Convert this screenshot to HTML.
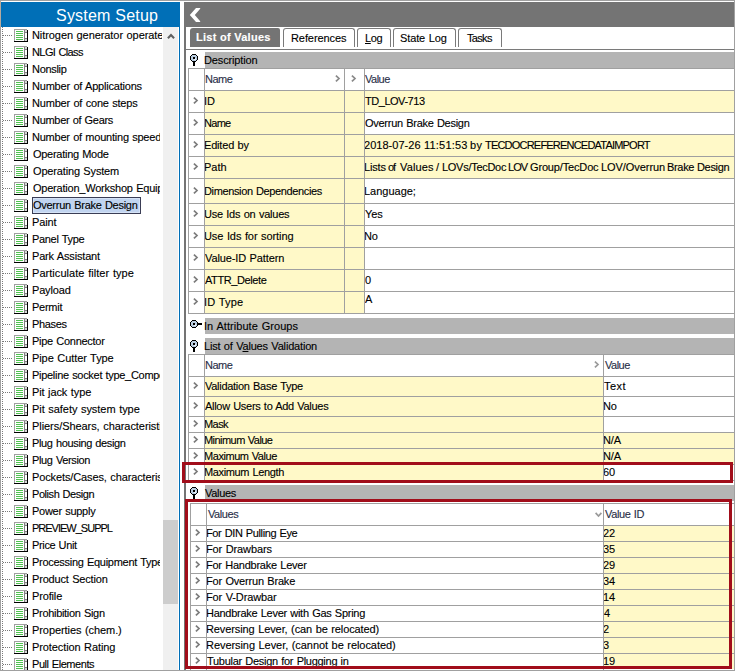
<!DOCTYPE html>
<html><head><meta charset="utf-8"><style>
html,body{margin:0;padding:0}
body{width:735px;height:671px;position:relative;overflow:hidden;background:#fff;font-family:"Liberation Sans",sans-serif}
div{position:absolute}
.t,.th,.tb{font-size:11px;line-height:13px;white-space:nowrap;color:#000;word-spacing:0.6px;-webkit-text-stroke:0.12px currentColor}
.th{color:#2a2f48}
.tb{font-weight:bold;color:#fff;word-spacing:0}
.hdr{font-size:16px;line-height:18px;color:#fff;white-space:nowrap}
u{text-decoration:underline}
</style></head><body>
<div style="left:0px;top:0px;width:735px;height:1px;background:#a0a0a0;"></div>
<div style="left:0px;top:0px;width:1px;height:671px;background:#a0a0a0;"></div>
<div style="left:0px;top:1px;width:1px;height:26px;background:#b6aa9e;"></div>
<div style="left:734px;top:0px;width:1px;height:671px;background:#a0a0a0;"></div>
<div style="left:0px;top:670px;width:735px;height:1px;background:#a0a0a0;"></div>
<div style="left:1px;top:2px;width:179px;height:25px;background:#006fb7;"></div>
<div class="hdr" style="left:56px;top:7px;letter-spacing:0.218px;">System Setup</div>
<div style="left:179px;top:27px;width:1px;height:643px;background:#006fb7;"></div>
<div style="left:163px;top:27px;width:15px;height:643px;background:#f0f0f0;"></div>
<div style="left:163px;top:520px;width:15px;height:84px;background:#cdcdcd;"></div>
<svg style="position:absolute;left:166px;top:32px" width="10" height="8" viewBox="0 0 10 8"><path d="M1.9 6.2 L5 3.1 L8.1 6.2" fill="none" stroke="#606060" stroke-width="2.1"/></svg>
<svg style="position:absolute;left:0;top:0" width="163" height="670" fill="#7a7a7a" shape-rendering="crispEdges"><rect x="2" y="27" width="1" height="1"/><rect x="2" y="29" width="1" height="1"/><rect x="2" y="31" width="1" height="1"/><rect x="2" y="33" width="1" height="1"/><rect x="2" y="35" width="1" height="1"/><rect x="2" y="37" width="1" height="1"/><rect x="2" y="39" width="1" height="1"/><rect x="2" y="41" width="1" height="1"/><rect x="2" y="43" width="1" height="1"/><rect x="2" y="45" width="1" height="1"/><rect x="2" y="47" width="1" height="1"/><rect x="2" y="49" width="1" height="1"/><rect x="2" y="51" width="1" height="1"/><rect x="2" y="53" width="1" height="1"/><rect x="2" y="55" width="1" height="1"/><rect x="2" y="57" width="1" height="1"/><rect x="2" y="59" width="1" height="1"/><rect x="2" y="61" width="1" height="1"/><rect x="2" y="63" width="1" height="1"/><rect x="2" y="65" width="1" height="1"/><rect x="2" y="67" width="1" height="1"/><rect x="2" y="69" width="1" height="1"/><rect x="2" y="71" width="1" height="1"/><rect x="2" y="73" width="1" height="1"/><rect x="2" y="75" width="1" height="1"/><rect x="2" y="77" width="1" height="1"/><rect x="2" y="79" width="1" height="1"/><rect x="2" y="81" width="1" height="1"/><rect x="2" y="83" width="1" height="1"/><rect x="2" y="85" width="1" height="1"/><rect x="2" y="87" width="1" height="1"/><rect x="2" y="89" width="1" height="1"/><rect x="2" y="91" width="1" height="1"/><rect x="2" y="93" width="1" height="1"/><rect x="2" y="95" width="1" height="1"/><rect x="2" y="97" width="1" height="1"/><rect x="2" y="99" width="1" height="1"/><rect x="2" y="101" width="1" height="1"/><rect x="2" y="103" width="1" height="1"/><rect x="2" y="105" width="1" height="1"/><rect x="2" y="107" width="1" height="1"/><rect x="2" y="109" width="1" height="1"/><rect x="2" y="111" width="1" height="1"/><rect x="2" y="113" width="1" height="1"/><rect x="2" y="115" width="1" height="1"/><rect x="2" y="117" width="1" height="1"/><rect x="2" y="119" width="1" height="1"/><rect x="2" y="121" width="1" height="1"/><rect x="2" y="123" width="1" height="1"/><rect x="2" y="125" width="1" height="1"/><rect x="2" y="127" width="1" height="1"/><rect x="2" y="129" width="1" height="1"/><rect x="2" y="131" width="1" height="1"/><rect x="2" y="133" width="1" height="1"/><rect x="2" y="135" width="1" height="1"/><rect x="2" y="137" width="1" height="1"/><rect x="2" y="139" width="1" height="1"/><rect x="2" y="141" width="1" height="1"/><rect x="2" y="143" width="1" height="1"/><rect x="2" y="145" width="1" height="1"/><rect x="2" y="147" width="1" height="1"/><rect x="2" y="149" width="1" height="1"/><rect x="2" y="151" width="1" height="1"/><rect x="2" y="153" width="1" height="1"/><rect x="2" y="155" width="1" height="1"/><rect x="2" y="157" width="1" height="1"/><rect x="2" y="159" width="1" height="1"/><rect x="2" y="161" width="1" height="1"/><rect x="2" y="163" width="1" height="1"/><rect x="2" y="165" width="1" height="1"/><rect x="2" y="167" width="1" height="1"/><rect x="2" y="169" width="1" height="1"/><rect x="2" y="171" width="1" height="1"/><rect x="2" y="173" width="1" height="1"/><rect x="2" y="175" width="1" height="1"/><rect x="2" y="177" width="1" height="1"/><rect x="2" y="179" width="1" height="1"/><rect x="2" y="181" width="1" height="1"/><rect x="2" y="183" width="1" height="1"/><rect x="2" y="185" width="1" height="1"/><rect x="2" y="187" width="1" height="1"/><rect x="2" y="189" width="1" height="1"/><rect x="2" y="191" width="1" height="1"/><rect x="2" y="193" width="1" height="1"/><rect x="2" y="195" width="1" height="1"/><rect x="2" y="197" width="1" height="1"/><rect x="2" y="199" width="1" height="1"/><rect x="2" y="201" width="1" height="1"/><rect x="2" y="203" width="1" height="1"/><rect x="2" y="205" width="1" height="1"/><rect x="2" y="207" width="1" height="1"/><rect x="2" y="209" width="1" height="1"/><rect x="2" y="211" width="1" height="1"/><rect x="2" y="213" width="1" height="1"/><rect x="2" y="215" width="1" height="1"/><rect x="2" y="217" width="1" height="1"/><rect x="2" y="219" width="1" height="1"/><rect x="2" y="221" width="1" height="1"/><rect x="2" y="223" width="1" height="1"/><rect x="2" y="225" width="1" height="1"/><rect x="2" y="227" width="1" height="1"/><rect x="2" y="229" width="1" height="1"/><rect x="2" y="231" width="1" height="1"/><rect x="2" y="233" width="1" height="1"/><rect x="2" y="235" width="1" height="1"/><rect x="2" y="237" width="1" height="1"/><rect x="2" y="239" width="1" height="1"/><rect x="2" y="241" width="1" height="1"/><rect x="2" y="243" width="1" height="1"/><rect x="2" y="245" width="1" height="1"/><rect x="2" y="247" width="1" height="1"/><rect x="2" y="249" width="1" height="1"/><rect x="2" y="251" width="1" height="1"/><rect x="2" y="253" width="1" height="1"/><rect x="2" y="255" width="1" height="1"/><rect x="2" y="257" width="1" height="1"/><rect x="2" y="259" width="1" height="1"/><rect x="2" y="261" width="1" height="1"/><rect x="2" y="263" width="1" height="1"/><rect x="2" y="265" width="1" height="1"/><rect x="2" y="267" width="1" height="1"/><rect x="2" y="269" width="1" height="1"/><rect x="2" y="271" width="1" height="1"/><rect x="2" y="273" width="1" height="1"/><rect x="2" y="275" width="1" height="1"/><rect x="2" y="277" width="1" height="1"/><rect x="2" y="279" width="1" height="1"/><rect x="2" y="281" width="1" height="1"/><rect x="2" y="283" width="1" height="1"/><rect x="2" y="285" width="1" height="1"/><rect x="2" y="287" width="1" height="1"/><rect x="2" y="289" width="1" height="1"/><rect x="2" y="291" width="1" height="1"/><rect x="2" y="293" width="1" height="1"/><rect x="2" y="295" width="1" height="1"/><rect x="2" y="297" width="1" height="1"/><rect x="2" y="299" width="1" height="1"/><rect x="2" y="301" width="1" height="1"/><rect x="2" y="303" width="1" height="1"/><rect x="2" y="305" width="1" height="1"/><rect x="2" y="307" width="1" height="1"/><rect x="2" y="309" width="1" height="1"/><rect x="2" y="311" width="1" height="1"/><rect x="2" y="313" width="1" height="1"/><rect x="2" y="315" width="1" height="1"/><rect x="2" y="317" width="1" height="1"/><rect x="2" y="319" width="1" height="1"/><rect x="2" y="321" width="1" height="1"/><rect x="2" y="323" width="1" height="1"/><rect x="2" y="325" width="1" height="1"/><rect x="2" y="327" width="1" height="1"/><rect x="2" y="329" width="1" height="1"/><rect x="2" y="331" width="1" height="1"/><rect x="2" y="333" width="1" height="1"/><rect x="2" y="335" width="1" height="1"/><rect x="2" y="337" width="1" height="1"/><rect x="2" y="339" width="1" height="1"/><rect x="2" y="341" width="1" height="1"/><rect x="2" y="343" width="1" height="1"/><rect x="2" y="345" width="1" height="1"/><rect x="2" y="347" width="1" height="1"/><rect x="2" y="349" width="1" height="1"/><rect x="2" y="351" width="1" height="1"/><rect x="2" y="353" width="1" height="1"/><rect x="2" y="355" width="1" height="1"/><rect x="2" y="357" width="1" height="1"/><rect x="2" y="359" width="1" height="1"/><rect x="2" y="361" width="1" height="1"/><rect x="2" y="363" width="1" height="1"/><rect x="2" y="365" width="1" height="1"/><rect x="2" y="367" width="1" height="1"/><rect x="2" y="369" width="1" height="1"/><rect x="2" y="371" width="1" height="1"/><rect x="2" y="373" width="1" height="1"/><rect x="2" y="375" width="1" height="1"/><rect x="2" y="377" width="1" height="1"/><rect x="2" y="379" width="1" height="1"/><rect x="2" y="381" width="1" height="1"/><rect x="2" y="383" width="1" height="1"/><rect x="2" y="385" width="1" height="1"/><rect x="2" y="387" width="1" height="1"/><rect x="2" y="389" width="1" height="1"/><rect x="2" y="391" width="1" height="1"/><rect x="2" y="393" width="1" height="1"/><rect x="2" y="395" width="1" height="1"/><rect x="2" y="397" width="1" height="1"/><rect x="2" y="399" width="1" height="1"/><rect x="2" y="401" width="1" height="1"/><rect x="2" y="403" width="1" height="1"/><rect x="2" y="405" width="1" height="1"/><rect x="2" y="407" width="1" height="1"/><rect x="2" y="409" width="1" height="1"/><rect x="2" y="411" width="1" height="1"/><rect x="2" y="413" width="1" height="1"/><rect x="2" y="415" width="1" height="1"/><rect x="2" y="417" width="1" height="1"/><rect x="2" y="419" width="1" height="1"/><rect x="2" y="421" width="1" height="1"/><rect x="2" y="423" width="1" height="1"/><rect x="2" y="425" width="1" height="1"/><rect x="2" y="427" width="1" height="1"/><rect x="2" y="429" width="1" height="1"/><rect x="2" y="431" width="1" height="1"/><rect x="2" y="433" width="1" height="1"/><rect x="2" y="435" width="1" height="1"/><rect x="2" y="437" width="1" height="1"/><rect x="2" y="439" width="1" height="1"/><rect x="2" y="441" width="1" height="1"/><rect x="2" y="443" width="1" height="1"/><rect x="2" y="445" width="1" height="1"/><rect x="2" y="447" width="1" height="1"/><rect x="2" y="449" width="1" height="1"/><rect x="2" y="451" width="1" height="1"/><rect x="2" y="453" width="1" height="1"/><rect x="2" y="455" width="1" height="1"/><rect x="2" y="457" width="1" height="1"/><rect x="2" y="459" width="1" height="1"/><rect x="2" y="461" width="1" height="1"/><rect x="2" y="463" width="1" height="1"/><rect x="2" y="465" width="1" height="1"/><rect x="2" y="467" width="1" height="1"/><rect x="2" y="469" width="1" height="1"/><rect x="2" y="471" width="1" height="1"/><rect x="2" y="473" width="1" height="1"/><rect x="2" y="475" width="1" height="1"/><rect x="2" y="477" width="1" height="1"/><rect x="2" y="479" width="1" height="1"/><rect x="2" y="481" width="1" height="1"/><rect x="2" y="483" width="1" height="1"/><rect x="2" y="485" width="1" height="1"/><rect x="2" y="487" width="1" height="1"/><rect x="2" y="489" width="1" height="1"/><rect x="2" y="491" width="1" height="1"/><rect x="2" y="493" width="1" height="1"/><rect x="2" y="495" width="1" height="1"/><rect x="2" y="497" width="1" height="1"/><rect x="2" y="499" width="1" height="1"/><rect x="2" y="501" width="1" height="1"/><rect x="2" y="503" width="1" height="1"/><rect x="2" y="505" width="1" height="1"/><rect x="2" y="507" width="1" height="1"/><rect x="2" y="509" width="1" height="1"/><rect x="2" y="511" width="1" height="1"/><rect x="2" y="513" width="1" height="1"/><rect x="2" y="515" width="1" height="1"/><rect x="2" y="517" width="1" height="1"/><rect x="2" y="519" width="1" height="1"/><rect x="2" y="521" width="1" height="1"/><rect x="2" y="523" width="1" height="1"/><rect x="2" y="525" width="1" height="1"/><rect x="2" y="527" width="1" height="1"/><rect x="2" y="529" width="1" height="1"/><rect x="2" y="531" width="1" height="1"/><rect x="2" y="533" width="1" height="1"/><rect x="2" y="535" width="1" height="1"/><rect x="2" y="537" width="1" height="1"/><rect x="2" y="539" width="1" height="1"/><rect x="2" y="541" width="1" height="1"/><rect x="2" y="543" width="1" height="1"/><rect x="2" y="545" width="1" height="1"/><rect x="2" y="547" width="1" height="1"/><rect x="2" y="549" width="1" height="1"/><rect x="2" y="551" width="1" height="1"/><rect x="2" y="553" width="1" height="1"/><rect x="2" y="555" width="1" height="1"/><rect x="2" y="557" width="1" height="1"/><rect x="2" y="559" width="1" height="1"/><rect x="2" y="561" width="1" height="1"/><rect x="2" y="563" width="1" height="1"/><rect x="2" y="565" width="1" height="1"/><rect x="2" y="567" width="1" height="1"/><rect x="2" y="569" width="1" height="1"/><rect x="2" y="571" width="1" height="1"/><rect x="2" y="573" width="1" height="1"/><rect x="2" y="575" width="1" height="1"/><rect x="2" y="577" width="1" height="1"/><rect x="2" y="579" width="1" height="1"/><rect x="2" y="581" width="1" height="1"/><rect x="2" y="583" width="1" height="1"/><rect x="2" y="585" width="1" height="1"/><rect x="2" y="587" width="1" height="1"/><rect x="2" y="589" width="1" height="1"/><rect x="2" y="591" width="1" height="1"/><rect x="2" y="593" width="1" height="1"/><rect x="2" y="595" width="1" height="1"/><rect x="2" y="597" width="1" height="1"/><rect x="2" y="599" width="1" height="1"/><rect x="2" y="601" width="1" height="1"/><rect x="2" y="603" width="1" height="1"/><rect x="2" y="605" width="1" height="1"/><rect x="2" y="607" width="1" height="1"/><rect x="2" y="609" width="1" height="1"/><rect x="2" y="611" width="1" height="1"/><rect x="2" y="613" width="1" height="1"/><rect x="2" y="615" width="1" height="1"/><rect x="2" y="617" width="1" height="1"/><rect x="2" y="619" width="1" height="1"/><rect x="2" y="621" width="1" height="1"/><rect x="2" y="623" width="1" height="1"/><rect x="2" y="625" width="1" height="1"/><rect x="2" y="627" width="1" height="1"/><rect x="2" y="629" width="1" height="1"/><rect x="2" y="631" width="1" height="1"/><rect x="2" y="633" width="1" height="1"/><rect x="2" y="635" width="1" height="1"/><rect x="2" y="637" width="1" height="1"/><rect x="2" y="639" width="1" height="1"/><rect x="2" y="641" width="1" height="1"/><rect x="2" y="643" width="1" height="1"/><rect x="2" y="645" width="1" height="1"/><rect x="2" y="647" width="1" height="1"/><rect x="2" y="649" width="1" height="1"/><rect x="2" y="651" width="1" height="1"/><rect x="2" y="653" width="1" height="1"/><rect x="2" y="655" width="1" height="1"/><rect x="2" y="657" width="1" height="1"/><rect x="2" y="659" width="1" height="1"/><rect x="2" y="661" width="1" height="1"/><rect x="2" y="663" width="1" height="1"/><rect x="2" y="665" width="1" height="1"/><rect x="2" y="667" width="1" height="1"/><rect x="2" y="669" width="1" height="1"/><rect x="3" y="35" width="1" height="1"/><rect x="5" y="35" width="1" height="1"/><rect x="7" y="35" width="1" height="1"/><rect x="9" y="35" width="1" height="1"/><rect x="11" y="35" width="1" height="1"/><rect x="3" y="52" width="1" height="1"/><rect x="5" y="52" width="1" height="1"/><rect x="7" y="52" width="1" height="1"/><rect x="9" y="52" width="1" height="1"/><rect x="11" y="52" width="1" height="1"/><rect x="3" y="69" width="1" height="1"/><rect x="5" y="69" width="1" height="1"/><rect x="7" y="69" width="1" height="1"/><rect x="9" y="69" width="1" height="1"/><rect x="11" y="69" width="1" height="1"/><rect x="3" y="86" width="1" height="1"/><rect x="5" y="86" width="1" height="1"/><rect x="7" y="86" width="1" height="1"/><rect x="9" y="86" width="1" height="1"/><rect x="11" y="86" width="1" height="1"/><rect x="3" y="103" width="1" height="1"/><rect x="5" y="103" width="1" height="1"/><rect x="7" y="103" width="1" height="1"/><rect x="9" y="103" width="1" height="1"/><rect x="11" y="103" width="1" height="1"/><rect x="3" y="120" width="1" height="1"/><rect x="5" y="120" width="1" height="1"/><rect x="7" y="120" width="1" height="1"/><rect x="9" y="120" width="1" height="1"/><rect x="11" y="120" width="1" height="1"/><rect x="3" y="137" width="1" height="1"/><rect x="5" y="137" width="1" height="1"/><rect x="7" y="137" width="1" height="1"/><rect x="9" y="137" width="1" height="1"/><rect x="11" y="137" width="1" height="1"/><rect x="3" y="154" width="1" height="1"/><rect x="5" y="154" width="1" height="1"/><rect x="7" y="154" width="1" height="1"/><rect x="9" y="154" width="1" height="1"/><rect x="11" y="154" width="1" height="1"/><rect x="3" y="171" width="1" height="1"/><rect x="5" y="171" width="1" height="1"/><rect x="7" y="171" width="1" height="1"/><rect x="9" y="171" width="1" height="1"/><rect x="11" y="171" width="1" height="1"/><rect x="3" y="188" width="1" height="1"/><rect x="5" y="188" width="1" height="1"/><rect x="7" y="188" width="1" height="1"/><rect x="9" y="188" width="1" height="1"/><rect x="11" y="188" width="1" height="1"/><rect x="3" y="205" width="1" height="1"/><rect x="5" y="205" width="1" height="1"/><rect x="7" y="205" width="1" height="1"/><rect x="9" y="205" width="1" height="1"/><rect x="11" y="205" width="1" height="1"/><rect x="3" y="222" width="1" height="1"/><rect x="5" y="222" width="1" height="1"/><rect x="7" y="222" width="1" height="1"/><rect x="9" y="222" width="1" height="1"/><rect x="11" y="222" width="1" height="1"/><rect x="3" y="239" width="1" height="1"/><rect x="5" y="239" width="1" height="1"/><rect x="7" y="239" width="1" height="1"/><rect x="9" y="239" width="1" height="1"/><rect x="11" y="239" width="1" height="1"/><rect x="3" y="256" width="1" height="1"/><rect x="5" y="256" width="1" height="1"/><rect x="7" y="256" width="1" height="1"/><rect x="9" y="256" width="1" height="1"/><rect x="11" y="256" width="1" height="1"/><rect x="3" y="273" width="1" height="1"/><rect x="5" y="273" width="1" height="1"/><rect x="7" y="273" width="1" height="1"/><rect x="9" y="273" width="1" height="1"/><rect x="11" y="273" width="1" height="1"/><rect x="3" y="290" width="1" height="1"/><rect x="5" y="290" width="1" height="1"/><rect x="7" y="290" width="1" height="1"/><rect x="9" y="290" width="1" height="1"/><rect x="11" y="290" width="1" height="1"/><rect x="3" y="307" width="1" height="1"/><rect x="5" y="307" width="1" height="1"/><rect x="7" y="307" width="1" height="1"/><rect x="9" y="307" width="1" height="1"/><rect x="11" y="307" width="1" height="1"/><rect x="3" y="324" width="1" height="1"/><rect x="5" y="324" width="1" height="1"/><rect x="7" y="324" width="1" height="1"/><rect x="9" y="324" width="1" height="1"/><rect x="11" y="324" width="1" height="1"/><rect x="3" y="341" width="1" height="1"/><rect x="5" y="341" width="1" height="1"/><rect x="7" y="341" width="1" height="1"/><rect x="9" y="341" width="1" height="1"/><rect x="11" y="341" width="1" height="1"/><rect x="3" y="358" width="1" height="1"/><rect x="5" y="358" width="1" height="1"/><rect x="7" y="358" width="1" height="1"/><rect x="9" y="358" width="1" height="1"/><rect x="11" y="358" width="1" height="1"/><rect x="3" y="375" width="1" height="1"/><rect x="5" y="375" width="1" height="1"/><rect x="7" y="375" width="1" height="1"/><rect x="9" y="375" width="1" height="1"/><rect x="11" y="375" width="1" height="1"/><rect x="3" y="392" width="1" height="1"/><rect x="5" y="392" width="1" height="1"/><rect x="7" y="392" width="1" height="1"/><rect x="9" y="392" width="1" height="1"/><rect x="11" y="392" width="1" height="1"/><rect x="3" y="409" width="1" height="1"/><rect x="5" y="409" width="1" height="1"/><rect x="7" y="409" width="1" height="1"/><rect x="9" y="409" width="1" height="1"/><rect x="11" y="409" width="1" height="1"/><rect x="3" y="426" width="1" height="1"/><rect x="5" y="426" width="1" height="1"/><rect x="7" y="426" width="1" height="1"/><rect x="9" y="426" width="1" height="1"/><rect x="11" y="426" width="1" height="1"/><rect x="3" y="443" width="1" height="1"/><rect x="5" y="443" width="1" height="1"/><rect x="7" y="443" width="1" height="1"/><rect x="9" y="443" width="1" height="1"/><rect x="11" y="443" width="1" height="1"/><rect x="3" y="460" width="1" height="1"/><rect x="5" y="460" width="1" height="1"/><rect x="7" y="460" width="1" height="1"/><rect x="9" y="460" width="1" height="1"/><rect x="11" y="460" width="1" height="1"/><rect x="3" y="477" width="1" height="1"/><rect x="5" y="477" width="1" height="1"/><rect x="7" y="477" width="1" height="1"/><rect x="9" y="477" width="1" height="1"/><rect x="11" y="477" width="1" height="1"/><rect x="3" y="494" width="1" height="1"/><rect x="5" y="494" width="1" height="1"/><rect x="7" y="494" width="1" height="1"/><rect x="9" y="494" width="1" height="1"/><rect x="11" y="494" width="1" height="1"/><rect x="3" y="511" width="1" height="1"/><rect x="5" y="511" width="1" height="1"/><rect x="7" y="511" width="1" height="1"/><rect x="9" y="511" width="1" height="1"/><rect x="11" y="511" width="1" height="1"/><rect x="3" y="528" width="1" height="1"/><rect x="5" y="528" width="1" height="1"/><rect x="7" y="528" width="1" height="1"/><rect x="9" y="528" width="1" height="1"/><rect x="11" y="528" width="1" height="1"/><rect x="3" y="545" width="1" height="1"/><rect x="5" y="545" width="1" height="1"/><rect x="7" y="545" width="1" height="1"/><rect x="9" y="545" width="1" height="1"/><rect x="11" y="545" width="1" height="1"/><rect x="3" y="562" width="1" height="1"/><rect x="5" y="562" width="1" height="1"/><rect x="7" y="562" width="1" height="1"/><rect x="9" y="562" width="1" height="1"/><rect x="11" y="562" width="1" height="1"/><rect x="3" y="579" width="1" height="1"/><rect x="5" y="579" width="1" height="1"/><rect x="7" y="579" width="1" height="1"/><rect x="9" y="579" width="1" height="1"/><rect x="11" y="579" width="1" height="1"/><rect x="3" y="596" width="1" height="1"/><rect x="5" y="596" width="1" height="1"/><rect x="7" y="596" width="1" height="1"/><rect x="9" y="596" width="1" height="1"/><rect x="11" y="596" width="1" height="1"/><rect x="3" y="613" width="1" height="1"/><rect x="5" y="613" width="1" height="1"/><rect x="7" y="613" width="1" height="1"/><rect x="9" y="613" width="1" height="1"/><rect x="11" y="613" width="1" height="1"/><rect x="3" y="630" width="1" height="1"/><rect x="5" y="630" width="1" height="1"/><rect x="7" y="630" width="1" height="1"/><rect x="9" y="630" width="1" height="1"/><rect x="11" y="630" width="1" height="1"/><rect x="3" y="647" width="1" height="1"/><rect x="5" y="647" width="1" height="1"/><rect x="7" y="647" width="1" height="1"/><rect x="9" y="647" width="1" height="1"/><rect x="11" y="647" width="1" height="1"/><rect x="3" y="664" width="1" height="1"/><rect x="5" y="664" width="1" height="1"/><rect x="7" y="664" width="1" height="1"/><rect x="9" y="664" width="1" height="1"/><rect x="11" y="664" width="1" height="1"/></svg>
<svg style="position:absolute;left:0;top:0" width="40" height="670" shape-rendering="crispEdges"><defs><g id="ic"><rect x="0" y="0" width="13" height="1" fill="#a0a0a0"/><rect x="0" y="0" width="1" height="12" fill="#a0a0a0"/><rect x="0" y="12" width="14" height="1" fill="#000"/><rect x="13" y="1" width="1" height="12" fill="#000"/><rect x="1" y="1" width="9" height="11" fill="#fff"/><rect x="2" y="2" width="7" height="1" fill="#4fc24f"/><rect x="2" y="4" width="7" height="1" fill="#4fc24f"/><rect x="2" y="6" width="7" height="1" fill="#4fc24f"/><rect x="2" y="8" width="7" height="1" fill="#4fc24f"/><rect x="2" y="10" width="7" height="1" fill="#4fc24f"/><rect x="10" y="1" width="1" height="11" fill="#808080"/><rect x="11" y="1" width="2" height="2" fill="#d6d6d6"/><rect x="11" y="3" width="2" height="1" fill="#808080"/><rect x="11" y="4" width="2" height="5" fill="#fff"/><rect x="11" y="9" width="2" height="1" fill="#808080"/><rect x="11" y="10" width="2" height="2" fill="#d6d6d6"/></g></defs><use href="#ic" x="14" y="29"/><use href="#ic" x="14" y="46"/><use href="#ic" x="14" y="63"/><use href="#ic" x="14" y="80"/><use href="#ic" x="14" y="97"/><use href="#ic" x="14" y="114"/><use href="#ic" x="14" y="131"/><use href="#ic" x="14" y="148"/><use href="#ic" x="14" y="165"/><use href="#ic" x="14" y="182"/><use href="#ic" x="14" y="199"/><use href="#ic" x="14" y="216"/><use href="#ic" x="14" y="233"/><use href="#ic" x="14" y="250"/><use href="#ic" x="14" y="267"/><use href="#ic" x="14" y="284"/><use href="#ic" x="14" y="301"/><use href="#ic" x="14" y="318"/><use href="#ic" x="14" y="335"/><use href="#ic" x="14" y="352"/><use href="#ic" x="14" y="369"/><use href="#ic" x="14" y="386"/><use href="#ic" x="14" y="403"/><use href="#ic" x="14" y="420"/><use href="#ic" x="14" y="437"/><use href="#ic" x="14" y="454"/><use href="#ic" x="14" y="471"/><use href="#ic" x="14" y="488"/><use href="#ic" x="14" y="505"/><use href="#ic" x="14" y="522"/><use href="#ic" x="14" y="539"/><use href="#ic" x="14" y="556"/><use href="#ic" x="14" y="573"/><use href="#ic" x="14" y="590"/><use href="#ic" x="14" y="607"/><use href="#ic" x="14" y="624"/><use href="#ic" x="14" y="641"/><use href="#ic" x="14" y="658"/></svg>
<div style="left:32px;top:197px;width:109px;height:17px;background:#c1d4f0;box-sizing:border-box;border:1px solid #3a3d55;box-shadow:inset 0 0 0 1px #d6e3f6;"></div>
<div style="left:0;top:27px;width:162px;height:17px;overflow:hidden">
<div class="t" style="left:32px;top:29px;letter-spacing:-0.075px;margin-top:-27px">Nitrogen generator operate</div>
</div>
<div style="left:0;top:44px;width:160px;height:626px;overflow:hidden">
<div class="t" style="left:32px;top:46px;letter-spacing:-0.589px;margin-top:-44px">NLGI Class</div>
<div class="t" style="left:32px;top:63px;letter-spacing:-0.300px;margin-top:-44px">Nonslip</div>
<div class="t" style="left:32px;top:80px;letter-spacing:-0.200px;margin-top:-44px">Number of Applications</div>
<div class="t" style="left:32px;top:97px;letter-spacing:-0.195px;margin-top:-44px">Number of cone steps</div>
<div class="t" style="left:32px;top:114px;letter-spacing:-0.300px;margin-top:-44px">Number of Gears</div>
<div class="t" style="left:32px;top:131px;letter-spacing:-0.227px;margin-top:-44px">Number of mounting speed</div>
<div class="t" style="left:33px;top:148px;letter-spacing:-0.277px;margin-top:-44px">Operating Mode</div>
<div class="t" style="left:33px;top:165px;letter-spacing:-0.160px;margin-top:-44px">Operating System</div>
<div class="t" style="left:33px;top:182px;letter-spacing:-0.223px;margin-top:-44px">Operation_Workshop Equipment</div>
<div class="t" style="left:33px;top:199px;letter-spacing:-0.274px;margin-top:-44px">Overrun Brake Design</div>
<div class="t" style="left:32px;top:216px;letter-spacing:-0.100px;margin-top:-44px">Paint</div>
<div class="t" style="left:32px;top:233px;letter-spacing:-0.322px;margin-top:-44px">Panel Type</div>
<div class="t" style="left:32px;top:250px;letter-spacing:-0.169px;margin-top:-44px">Park Assistant</div>
<div class="t" style="left:32px;top:267px;letter-spacing:0.045px;margin-top:-44px">Particulate filter type</div>
<div class="t" style="left:32px;top:284px;letter-spacing:-0.167px;margin-top:-44px">Payload</div>
<div class="t" style="left:32px;top:301px;letter-spacing:-0.260px;margin-top:-44px">Permit</div>
<div class="t" style="left:32px;top:318px;letter-spacing:-0.320px;margin-top:-44px">Phases</div>
<div class="t" style="left:32px;top:335px;letter-spacing:-0.277px;margin-top:-44px">Pipe Connector</div>
<div class="t" style="left:32px;top:352px;letter-spacing:-0.080px;margin-top:-44px">Pipe Cutter Type</div>
<div class="t" style="left:32px;top:369px;letter-spacing:-0.296px;margin-top:-44px">Pipeline socket type_Components</div>
<div class="t" style="left:32px;top:386px;letter-spacing:-0.100px;margin-top:-44px">Pit jack type</div>
<div class="t" style="left:32px;top:403px;letter-spacing:-0.048px;margin-top:-44px">Pit safety system type</div>
<div class="t" style="left:32px;top:420px;letter-spacing:-0.062px;margin-top:-44px">Pliers/Shears, characteristics</div>
<div class="t" style="left:32px;top:437px;letter-spacing:-0.350px;margin-top:-44px">Plug housing design</div>
<div class="t" style="left:32px;top:454px;letter-spacing:-0.355px;margin-top:-44px">Plug Version</div>
<div class="t" style="left:32px;top:471px;letter-spacing:-0.121px;margin-top:-44px">Pockets/Cases, characteristics</div>
<div class="t" style="left:32px;top:488px;letter-spacing:-0.442px;margin-top:-44px">Polish Design</div>
<div class="t" style="left:32px;top:505px;letter-spacing:-0.273px;margin-top:-44px">Power supply</div>
<div class="t" style="left:32px;top:522px;letter-spacing:-1.000px;margin-top:-44px">PREVIEW_SUPPL</div>
<div class="t" style="left:32px;top:539px;letter-spacing:-0.356px;margin-top:-44px">Price Unit</div>
<div class="t" style="left:32px;top:556px;letter-spacing:-0.283px;margin-top:-44px">Processing Equipment Type</div>
<div class="t" style="left:32px;top:573px;letter-spacing:-0.179px;margin-top:-44px">Product Section</div>
<div class="t" style="left:32px;top:590px;letter-spacing:-0.150px;margin-top:-44px">Profile</div>
<div class="t" style="left:32px;top:607px;letter-spacing:-0.307px;margin-top:-44px">Prohibition Sign</div>
<div class="t" style="left:32px;top:624px;letter-spacing:-0.076px;margin-top:-44px">Properties (chem.)</div>
<div class="t" style="left:32px;top:641px;letter-spacing:-0.100px;margin-top:-44px">Protection Rating</div>
<div class="t" style="left:32px;top:658px;letter-spacing:-0.442px;margin-top:-44px">Pull Elements</div>
</div>
<div style="left:184px;top:2px;width:550px;height:25px;background:#747474;"></div>
<div style="left:184px;top:27px;width:2px;height:643px;background:#747474;"></div>
<svg style="position:absolute;left:186px;top:4px" width="18" height="20" viewBox="186 4 18 20"><path d="M196 8 L200.2 8 L200.2 8.8 L194.8 15 L200.2 21.2 L200.2 22 L196 22 L189.8 15 Z" fill="#fff"/></svg>
<div style="left:190px;top:28px;width:90px;height:19px;background:#747474;border-top-left-radius:3px;border-top-right-radius:2px"></div>
<div class="tb" style="left:196px;top:31px;letter-spacing:0.269px;">List of Values</div>
<div style="left:283px;top:28px;width:72px;height:19px;box-sizing:border-box;border:1px solid #7a7a7a;border-bottom:none;border-radius:3px 3px 0 0;background:#fff"></div>
<div class="t" style="left:291px;top:32px;letter-spacing:-0.089px;">References</div>
<div style="left:357px;top:28px;width:34px;height:19px;box-sizing:border-box;border:1px solid #7a7a7a;border-bottom:none;border-radius:3px 3px 0 0;background:#fff"></div>
<div class="t" style="left:365px;top:32px;letter-spacing:-0.350px;"><u>L</u>og</div>
<div style="left:393px;top:28px;width:63px;height:19px;box-sizing:border-box;border:1px solid #7a7a7a;border-bottom:none;border-radius:3px 3px 0 0;background:#fff"></div>
<div class="t" style="left:400px;top:32px;letter-spacing:-0.113px;">State Log</div>
<div style="left:458px;top:28px;width:44px;height:19px;box-sizing:border-box;border:1px solid #7a7a7a;border-bottom:none;border-radius:3px 3px 0 0;background:#fff"></div>
<div class="t" style="left:467px;top:32px;letter-spacing:-0.675px;">Tasks</div>
<div style="left:186px;top:49px;width:548px;height:1px;background:#7a7a7a;"></div>
<div style="left:205px;top:52px;width:529px;height:16px;background:#b4b4b4;"></div>
<div class="t" style="left:204px;top:54px;letter-spacing:-0.140px;">Description</div>
<svg style="position:absolute;left:190px;top:54px" width="8" height="12" shape-rendering="crispEdges"><rect x="2" y="0" width="4" height="1" fill="#000"/><rect x="1" y="1" width="1" height="1" fill="#000"/><rect x="6" y="1" width="1" height="1" fill="#000"/><rect x="0" y="2" width="1" height="4" fill="#000"/><rect x="7" y="2" width="1" height="4" fill="#000"/><rect x="1" y="6" width="1" height="1" fill="#000"/><rect x="6" y="6" width="1" height="1" fill="#000"/><rect x="2" y="7" width="4" height="1" fill="#000"/><rect x="2" y="1" width="4" height="6" fill="#b9cde0"/><rect x="1" y="2" width="6" height="4" fill="#b9cde0"/><rect x="4" y="4" width="2" height="2" fill="#e8f0f8"/><rect x="3" y="3" width="2" height="2" fill="#000"/><rect x="3" y="8" width="2" height="4" fill="#000"/></svg>
<div style="left:205px;top:91px;width:159px;height:21px;background:#fff9c8;"></div>
<div style="left:365px;top:91px;width:369px;height:21px;background:#fff9c8;"></div>
<svg style="position:absolute;left:193px;top:97px" width="6" height="7"><path d="M0.9 0.6 L4 3.5 L0.9 6.4" fill="none" stroke="#7c7c7c" stroke-width="1.7"/></svg>
<div class="t" style="left:204px;top:95px;letter-spacing:-0.100px;">ID</div>
<div class="t" style="left:365px;top:95px;letter-spacing:-0.467px;">TD_LOV-713</div>
<div style="left:205px;top:113px;width:159px;height:21px;background:#fff9c8;"></div>
<svg style="position:absolute;left:193px;top:119px" width="6" height="7"><path d="M0.9 0.6 L4 3.5 L0.9 6.4" fill="none" stroke="#7c7c7c" stroke-width="1.7"/></svg>
<div class="t" style="left:204px;top:117px;letter-spacing:-0.700px;">Name</div>
<div class="t" style="left:365px;top:117px;letter-spacing:-0.274px;">Overrun Brake Design</div>
<div style="left:205px;top:135px;width:159px;height:21px;background:#fff9c8;"></div>
<div style="left:365px;top:135px;width:369px;height:21px;background:#fff9c8;"></div>
<svg style="position:absolute;left:193px;top:141px" width="6" height="7"><path d="M0.9 0.6 L4 3.5 L0.9 6.4" fill="none" stroke="#7c7c7c" stroke-width="1.7"/></svg>
<div class="t" style="left:204px;top:139px;letter-spacing:-0.188px;">Edited by</div>
<div class="t" style="left:364px;top:139px;letter-spacing:0.033px;">2018-07-26</div>
<div class="t" style="left:424px;top:139px;letter-spacing:0.200px;">11:51:53</div>
<div class="t" style="left:470px;top:139px;letter-spacing:0.500px;">by</div>
<div class="t" style="left:485px;top:139px;letter-spacing:-0.792px;">TECDOCREFERENCEDATAIMPORT</div>
<div style="left:205px;top:157px;width:159px;height:21px;background:#fff9c8;"></div>
<div style="left:365px;top:157px;width:369px;height:21px;background:#fff9c8;"></div>
<svg style="position:absolute;left:193px;top:163px" width="6" height="7"><path d="M0.9 0.6 L4 3.5 L0.9 6.4" fill="none" stroke="#7c7c7c" stroke-width="1.7"/></svg>
<div class="t" style="left:204px;top:161px;letter-spacing:0.033px;">Path</div>
<div class="t" style="left:364px;top:161px;letter-spacing:-0.150px;">Lists</div>
<div class="t" style="left:388px;top:161px;letter-spacing:-1.000px;">of</div>
<div class="t" style="left:400px;top:161px;letter-spacing:0.140px;">Values</div>
<div class="t" style="left:436px;top:161px;letter-spacing:0.500px;">/</div>
<div class="t" style="left:442px;top:161px;letter-spacing:-0.280px;">LOVs/TecDoc</div>
<div class="t" style="left:508px;top:161px;letter-spacing:-0.950px;">LOV</div>
<div class="t" style="left:530px;top:161px;letter-spacing:-0.155px;">Group/TecDoc</div>
<div class="t" style="left:601px;top:161px;letter-spacing:-0.060px;">LOV/Overrun</div>
<div class="t" style="left:667px;top:161px;letter-spacing:-0.325px;">Brake</div>
<div class="t" style="left:697px;top:161px;letter-spacing:-0.320px;">Design</div>
<div style="left:205px;top:179px;width:159px;height:24px;background:#fff9c8;"></div>
<svg style="position:absolute;left:193px;top:187px" width="6" height="7"><path d="M0.9 0.6 L4 3.5 L0.9 6.4" fill="none" stroke="#7c7c7c" stroke-width="1.7"/></svg>
<div class="t" style="left:204px;top:185px;letter-spacing:-0.367px;">Dimension Dependencies</div>
<div class="t" style="left:364px;top:185px;letter-spacing:-0.013px;">Language;</div>
<div style="left:205px;top:204px;width:159px;height:21px;background:#fff9c8;"></div>
<svg style="position:absolute;left:193px;top:210px" width="6" height="7"><path d="M0.9 0.6 L4 3.5 L0.9 6.4" fill="none" stroke="#7c7c7c" stroke-width="1.7"/></svg>
<div class="t" style="left:204px;top:208px;letter-spacing:-0.231px;">Use Ids on values</div>
<div class="t" style="left:365px;top:208px;letter-spacing:-0.150px;">Yes</div>
<div style="left:205px;top:226px;width:159px;height:21px;background:#fff9c8;"></div>
<svg style="position:absolute;left:193px;top:232px" width="6" height="7"><path d="M0.9 0.6 L4 3.5 L0.9 6.4" fill="none" stroke="#7c7c7c" stroke-width="1.7"/></svg>
<div class="t" style="left:204px;top:230px;letter-spacing:-0.083px;">Use Ids for sorting</div>
<div class="t" style="left:364px;top:230px;letter-spacing:-0.150px;">No</div>
<div style="left:205px;top:248px;width:159px;height:21px;background:#fff9c8;"></div>
<svg style="position:absolute;left:193px;top:254px" width="6" height="7"><path d="M0.9 0.6 L4 3.5 L0.9 6.4" fill="none" stroke="#7c7c7c" stroke-width="1.7"/></svg>
<div class="t" style="left:205px;top:252px;letter-spacing:-0.120px;">Value-ID Pattern</div>
<div style="left:205px;top:270px;width:159px;height:21px;background:#fff9c8;"></div>
<svg style="position:absolute;left:193px;top:276px" width="6" height="7"><path d="M0.9 0.6 L4 3.5 L0.9 6.4" fill="none" stroke="#7c7c7c" stroke-width="1.7"/></svg>
<div class="t" style="left:205px;top:274px;letter-spacing:-0.400px;">ATTR_Delete</div>
<div class="t" style="left:365px;top:274px;letter-spacing:-0.150px;">0</div>
<div style="left:205px;top:292px;width:159px;height:21px;background:#fff9c8;"></div>
<svg style="position:absolute;left:193px;top:298px" width="6" height="7"><path d="M0.9 0.6 L4 3.5 L0.9 6.4" fill="none" stroke="#7c7c7c" stroke-width="1.7"/></svg>
<div class="t" style="left:204px;top:296px;letter-spacing:0.117px;">ID Type</div>
<div class="t" style="left:365px;top:293px;letter-spacing:-0.150px;">A</div>
<div style="left:188px;top:68px;width:546px;height:1px;background:#a0a0a0;"></div>
<div style="left:188px;top:90px;width:546px;height:1px;background:#a0a0a0;"></div>
<div style="left:188px;top:112px;width:546px;height:1px;background:#a0a0a0;"></div>
<div style="left:188px;top:134px;width:546px;height:1px;background:#a0a0a0;"></div>
<div style="left:188px;top:156px;width:546px;height:1px;background:#a0a0a0;"></div>
<div style="left:188px;top:178px;width:546px;height:1px;background:#a0a0a0;"></div>
<div style="left:188px;top:203px;width:546px;height:1px;background:#a0a0a0;"></div>
<div style="left:188px;top:225px;width:546px;height:1px;background:#a0a0a0;"></div>
<div style="left:188px;top:247px;width:546px;height:1px;background:#a0a0a0;"></div>
<div style="left:188px;top:269px;width:546px;height:1px;background:#a0a0a0;"></div>
<div style="left:188px;top:291px;width:546px;height:1px;background:#a0a0a0;"></div>
<div style="left:188px;top:313px;width:546px;height:1px;background:#a0a0a0;"></div>
<div style="left:188px;top:68px;width:1px;height:246px;background:#a0a0a0;"></div>
<div style="left:204px;top:68px;width:1px;height:246px;background:#a0a0a0;"></div>
<div style="left:344px;top:68px;width:1px;height:246px;background:#a0a0a0;"></div>
<div style="left:364px;top:68px;width:1px;height:246px;background:#a0a0a0;"></div>
<div class="th" style="left:205px;top:73px;letter-spacing:-0.500px;">Name</div>
<svg style="position:absolute;left:335px;top:75px" width="6" height="7"><path d="M0.9 0.6 L4 3.5 L0.9 6.4" fill="none" stroke="#8a8a8a" stroke-width="1.7"/></svg>
<svg style="position:absolute;left:351px;top:75px" width="6" height="7"><path d="M0.9 0.6 L4 3.5 L0.9 6.4" fill="none" stroke="#8a8a8a" stroke-width="1.7"/></svg>
<div class="th" style="left:365px;top:73px;letter-spacing:-0.500px;">Value</div>
<div style="left:205px;top:318px;width:529px;height:16px;background:#b4b4b4;"></div>
<div class="t" style="left:204px;top:320px;letter-spacing:0.061px;">In Attribute Groups</div>
<svg style="position:absolute;left:190px;top:320px" width="12" height="8" shape-rendering="crispEdges"><rect x="2" y="0" width="4" height="1" fill="#000"/><rect x="1" y="1" width="1" height="1" fill="#000"/><rect x="6" y="1" width="1" height="1" fill="#000"/><rect x="0" y="2" width="1" height="4" fill="#000"/><rect x="7" y="2" width="1" height="4" fill="#000"/><rect x="1" y="6" width="1" height="1" fill="#000"/><rect x="6" y="6" width="1" height="1" fill="#000"/><rect x="2" y="7" width="4" height="1" fill="#000"/><rect x="2" y="1" width="4" height="6" fill="#b9cde0"/><rect x="1" y="2" width="6" height="4" fill="#b9cde0"/><rect x="4" y="4" width="2" height="2" fill="#e8f0f8"/><rect x="3" y="3" width="2" height="2" fill="#000"/><rect x="8" y="3" width="4" height="2" fill="#000"/></svg>
<div style="left:205px;top:338px;width:529px;height:16px;background:#b4b4b4;"></div>
<div class="t" style="left:204px;top:340px;letter-spacing:-0.183px;">List of V<u>a</u>lues Validation</div>
<svg style="position:absolute;left:190px;top:340px" width="8" height="12" shape-rendering="crispEdges"><rect x="2" y="0" width="4" height="1" fill="#000"/><rect x="1" y="1" width="1" height="1" fill="#000"/><rect x="6" y="1" width="1" height="1" fill="#000"/><rect x="0" y="2" width="1" height="4" fill="#000"/><rect x="7" y="2" width="1" height="4" fill="#000"/><rect x="1" y="6" width="1" height="1" fill="#000"/><rect x="6" y="6" width="1" height="1" fill="#000"/><rect x="2" y="7" width="4" height="1" fill="#000"/><rect x="2" y="1" width="4" height="6" fill="#b9cde0"/><rect x="1" y="2" width="6" height="4" fill="#b9cde0"/><rect x="4" y="4" width="2" height="2" fill="#e8f0f8"/><rect x="3" y="3" width="2" height="2" fill="#000"/><rect x="3" y="8" width="2" height="4" fill="#000"/></svg>
<div style="left:205px;top:377px;width:398px;height:19px;background:#fff9c8;"></div>
<svg style="position:absolute;left:193px;top:382px" width="6" height="7"><path d="M0.9 0.6 L4 3.5 L0.9 6.4" fill="none" stroke="#7c7c7c" stroke-width="1.7"/></svg>
<div class="t" style="left:205px;top:380px;letter-spacing:-0.284px;">Validation Base Type</div>
<div class="t" style="left:604px;top:380px;letter-spacing:0.500px;">Text</div>
<div style="left:205px;top:397px;width:398px;height:19px;background:#fff9c8;"></div>
<svg style="position:absolute;left:193px;top:402px" width="6" height="7"><path d="M0.9 0.6 L4 3.5 L0.9 6.4" fill="none" stroke="#7c7c7c" stroke-width="1.7"/></svg>
<div class="t" style="left:205px;top:400px;letter-spacing:-0.288px;">Allow Users to Add Values</div>
<div class="t" style="left:603px;top:400px;letter-spacing:-0.150px;">No</div>
<div style="left:205px;top:417px;width:398px;height:15px;background:#fff9c8;"></div>
<svg style="position:absolute;left:193px;top:420px" width="6" height="7"><path d="M0.9 0.6 L4 3.5 L0.9 6.4" fill="none" stroke="#7c7c7c" stroke-width="1.7"/></svg>
<div class="t" style="left:204px;top:418px;letter-spacing:-0.567px;">Mask</div>
<div style="left:205px;top:433px;width:398px;height:15px;background:#fff9c8;"></div>
<div style="left:604px;top:433px;width:130px;height:15px;background:#fff9c8;"></div>
<svg style="position:absolute;left:193px;top:436px" width="6" height="7"><path d="M0.9 0.6 L4 3.5 L0.9 6.4" fill="none" stroke="#7c7c7c" stroke-width="1.7"/></svg>
<div class="t" style="left:204px;top:434px;letter-spacing:-0.550px;">Minimum Value</div>
<div class="t" style="left:603px;top:434px;letter-spacing:-0.150px;">N/A</div>
<div style="left:205px;top:449px;width:398px;height:15px;background:#fff9c8;"></div>
<div style="left:604px;top:449px;width:130px;height:15px;background:#fff9c8;"></div>
<svg style="position:absolute;left:193px;top:452px" width="6" height="7"><path d="M0.9 0.6 L4 3.5 L0.9 6.4" fill="none" stroke="#7c7c7c" stroke-width="1.7"/></svg>
<div class="t" style="left:204px;top:450px;letter-spacing:-0.442px;">Maximum Value</div>
<div class="t" style="left:603px;top:450px;letter-spacing:-0.150px;">N/A</div>
<div style="left:205px;top:465px;width:398px;height:15px;background:#fff9c8;"></div>
<svg style="position:absolute;left:193px;top:468px" width="6" height="7"><path d="M0.9 0.6 L4 3.5 L0.9 6.4" fill="none" stroke="#7c7c7c" stroke-width="1.7"/></svg>
<div class="t" style="left:204px;top:466px;letter-spacing:-0.362px;">Maximum Length</div>
<div class="t" style="left:603px;top:466px;letter-spacing:-0.150px;">60</div>
<div style="left:188px;top:354px;width:546px;height:1px;background:#a0a0a0;"></div>
<div style="left:188px;top:376px;width:546px;height:1px;background:#a0a0a0;"></div>
<div style="left:188px;top:396px;width:546px;height:1px;background:#a0a0a0;"></div>
<div style="left:188px;top:416px;width:546px;height:1px;background:#a0a0a0;"></div>
<div style="left:188px;top:432px;width:546px;height:1px;background:#a0a0a0;"></div>
<div style="left:188px;top:448px;width:546px;height:1px;background:#a0a0a0;"></div>
<div style="left:188px;top:464px;width:546px;height:1px;background:#a0a0a0;"></div>
<div style="left:188px;top:480px;width:546px;height:1px;background:#a0a0a0;"></div>
<div style="left:188px;top:354px;width:1px;height:127px;background:#a0a0a0;"></div>
<div style="left:204px;top:354px;width:1px;height:127px;background:#a0a0a0;"></div>
<div style="left:603px;top:354px;width:1px;height:127px;background:#a0a0a0;"></div>
<div class="th" style="left:205px;top:359px;letter-spacing:-0.500px;">Name</div>
<svg style="position:absolute;left:594px;top:361px" width="6" height="7"><path d="M0.9 0.6 L4 3.5 L0.9 6.4" fill="none" stroke="#9a9a9a" stroke-width="1.7"/></svg>
<div class="th" style="left:605px;top:359px;letter-spacing:-0.500px;">Value</div>
<div style="left:205px;top:485px;width:529px;height:16px;background:#b4b4b4;"></div>
<div class="t" style="left:205px;top:487px;letter-spacing:-0.300px;">Values</div>
<svg style="position:absolute;left:190px;top:487px" width="8" height="12" shape-rendering="crispEdges"><rect x="2" y="0" width="4" height="1" fill="#000"/><rect x="1" y="1" width="1" height="1" fill="#000"/><rect x="6" y="1" width="1" height="1" fill="#000"/><rect x="0" y="2" width="1" height="4" fill="#000"/><rect x="7" y="2" width="1" height="4" fill="#000"/><rect x="1" y="6" width="1" height="1" fill="#000"/><rect x="6" y="6" width="1" height="1" fill="#000"/><rect x="2" y="7" width="4" height="1" fill="#000"/><rect x="2" y="1" width="4" height="6" fill="#b9cde0"/><rect x="1" y="2" width="6" height="4" fill="#b9cde0"/><rect x="4" y="4" width="2" height="2" fill="#e8f0f8"/><rect x="3" y="3" width="2" height="2" fill="#000"/><rect x="3" y="8" width="2" height="4" fill="#000"/></svg>
<div style="left:604px;top:526px;width:130px;height:15px;background:#fff9c8;"></div>
<svg style="position:absolute;left:195px;top:529px" width="6" height="7"><path d="M0.9 0.6 L4 3.5 L0.9 6.4" fill="none" stroke="#7c7c7c" stroke-width="1.7"/></svg>
<div class="t" style="left:206px;top:527px;letter-spacing:-0.372px;">For DIN Pulling Eye</div>
<div class="t" style="left:603px;top:527px;letter-spacing:-0.150px;">22</div>
<div style="left:604px;top:542px;width:130px;height:15px;background:#fff9c8;"></div>
<svg style="position:absolute;left:195px;top:545px" width="6" height="7"><path d="M0.9 0.6 L4 3.5 L0.9 6.4" fill="none" stroke="#7c7c7c" stroke-width="1.7"/></svg>
<div class="t" style="left:206px;top:543px;letter-spacing:-0.118px;">For Drawbars</div>
<div class="t" style="left:603px;top:543px;letter-spacing:-0.150px;">35</div>
<div style="left:604px;top:558px;width:130px;height:15px;background:#fff9c8;"></div>
<svg style="position:absolute;left:195px;top:561px" width="6" height="7"><path d="M0.9 0.6 L4 3.5 L0.9 6.4" fill="none" stroke="#7c7c7c" stroke-width="1.7"/></svg>
<div class="t" style="left:206px;top:559px;letter-spacing:-0.239px;">For Handbrake Lever</div>
<div class="t" style="left:603px;top:559px;letter-spacing:-0.150px;">29</div>
<div style="left:604px;top:574px;width:130px;height:15px;background:#fff9c8;"></div>
<svg style="position:absolute;left:195px;top:577px" width="6" height="7"><path d="M0.9 0.6 L4 3.5 L0.9 6.4" fill="none" stroke="#7c7c7c" stroke-width="1.7"/></svg>
<div class="t" style="left:206px;top:575px;letter-spacing:-0.188px;">For Overrun Brake</div>
<div class="t" style="left:603px;top:575px;letter-spacing:-0.150px;">34</div>
<div style="left:604px;top:590px;width:130px;height:15px;background:#fff9c8;"></div>
<svg style="position:absolute;left:195px;top:593px" width="6" height="7"><path d="M0.9 0.6 L4 3.5 L0.9 6.4" fill="none" stroke="#7c7c7c" stroke-width="1.7"/></svg>
<div class="t" style="left:206px;top:591px;letter-spacing:-0.117px;">For V-Drawbar</div>
<div class="t" style="left:603px;top:591px;letter-spacing:-0.150px;">14</div>
<div style="left:604px;top:606px;width:130px;height:15px;background:#fff9c8;"></div>
<svg style="position:absolute;left:195px;top:609px" width="6" height="7"><path d="M0.9 0.6 L4 3.5 L0.9 6.4" fill="none" stroke="#7c7c7c" stroke-width="1.7"/></svg>
<div class="t" style="left:206px;top:607px;letter-spacing:-0.273px;">Handbrake Lever with Gas Spring</div>
<div class="t" style="left:604px;top:607px;letter-spacing:-0.150px;">4</div>
<div style="left:604px;top:622px;width:130px;height:15px;background:#fff9c8;"></div>
<svg style="position:absolute;left:195px;top:625px" width="6" height="7"><path d="M0.9 0.6 L4 3.5 L0.9 6.4" fill="none" stroke="#7c7c7c" stroke-width="1.7"/></svg>
<div class="t" style="left:206px;top:623px;letter-spacing:-0.100px;">Reversing Lever, (can be relocated)</div>
<div class="t" style="left:603px;top:623px;letter-spacing:-0.150px;">2</div>
<div style="left:604px;top:638px;width:130px;height:15px;background:#fff9c8;"></div>
<svg style="position:absolute;left:195px;top:641px" width="6" height="7"><path d="M0.9 0.6 L4 3.5 L0.9 6.4" fill="none" stroke="#7c7c7c" stroke-width="1.7"/></svg>
<div class="t" style="left:206px;top:639px;letter-spacing:-0.062px;">Reversing Lever, (cannot be relocated)</div>
<div class="t" style="left:603px;top:639px;letter-spacing:-0.150px;">3</div>
<div style="left:604px;top:654px;width:130px;height:15px;background:#fff9c8;"></div>
<svg style="position:absolute;left:195px;top:657px" width="6" height="7"><path d="M0.9 0.6 L4 3.5 L0.9 6.4" fill="none" stroke="#7c7c7c" stroke-width="1.7"/></svg>
<div class="t" style="left:207px;top:655px;letter-spacing:-0.279px;">Tubular Design for Plugging in</div>
<div class="t" style="left:603px;top:655px;letter-spacing:-0.150px;">19</div>
<div style="left:190px;top:503px;width:544px;height:1px;background:#a0a0a0;"></div>
<div style="left:190px;top:525px;width:544px;height:1px;background:#a0a0a0;"></div>
<div style="left:190px;top:541px;width:544px;height:1px;background:#a0a0a0;"></div>
<div style="left:190px;top:557px;width:544px;height:1px;background:#a0a0a0;"></div>
<div style="left:190px;top:573px;width:544px;height:1px;background:#a0a0a0;"></div>
<div style="left:190px;top:589px;width:544px;height:1px;background:#a0a0a0;"></div>
<div style="left:190px;top:605px;width:544px;height:1px;background:#a0a0a0;"></div>
<div style="left:190px;top:621px;width:544px;height:1px;background:#a0a0a0;"></div>
<div style="left:190px;top:637px;width:544px;height:1px;background:#a0a0a0;"></div>
<div style="left:190px;top:653px;width:544px;height:1px;background:#a0a0a0;"></div>
<div style="left:190px;top:653px;width:544px;height:1px;background:#a0a0a0;"></div>
<div style="left:190px;top:503px;width:1px;height:167px;background:#a0a0a0;"></div>
<div style="left:206px;top:503px;width:1px;height:167px;background:#a0a0a0;"></div>
<div style="left:603px;top:503px;width:1px;height:167px;background:#a0a0a0;"></div>
<div class="th" style="left:208px;top:508px;letter-spacing:-0.420px;">Values</div>
<svg style="position:absolute;left:595px;top:512px" width="7" height="6"><path d="M0.6 0.9 L3.5 4 L6.4 0.9" fill="none" stroke="#9a9a9a" stroke-width="1.7"/></svg>
<div class="th" style="left:605px;top:508px;letter-spacing:-0.371px;">Value ID</div>
<div style="left:182px;top:462px;width:551px;height:21px;box-sizing:border-box;border:3px solid #a10d1a"></div>
<div style="left:185px;top:499px;width:547px;height:170px;box-sizing:border-box;border:3px solid #a10d1a"></div>
</body></html>
